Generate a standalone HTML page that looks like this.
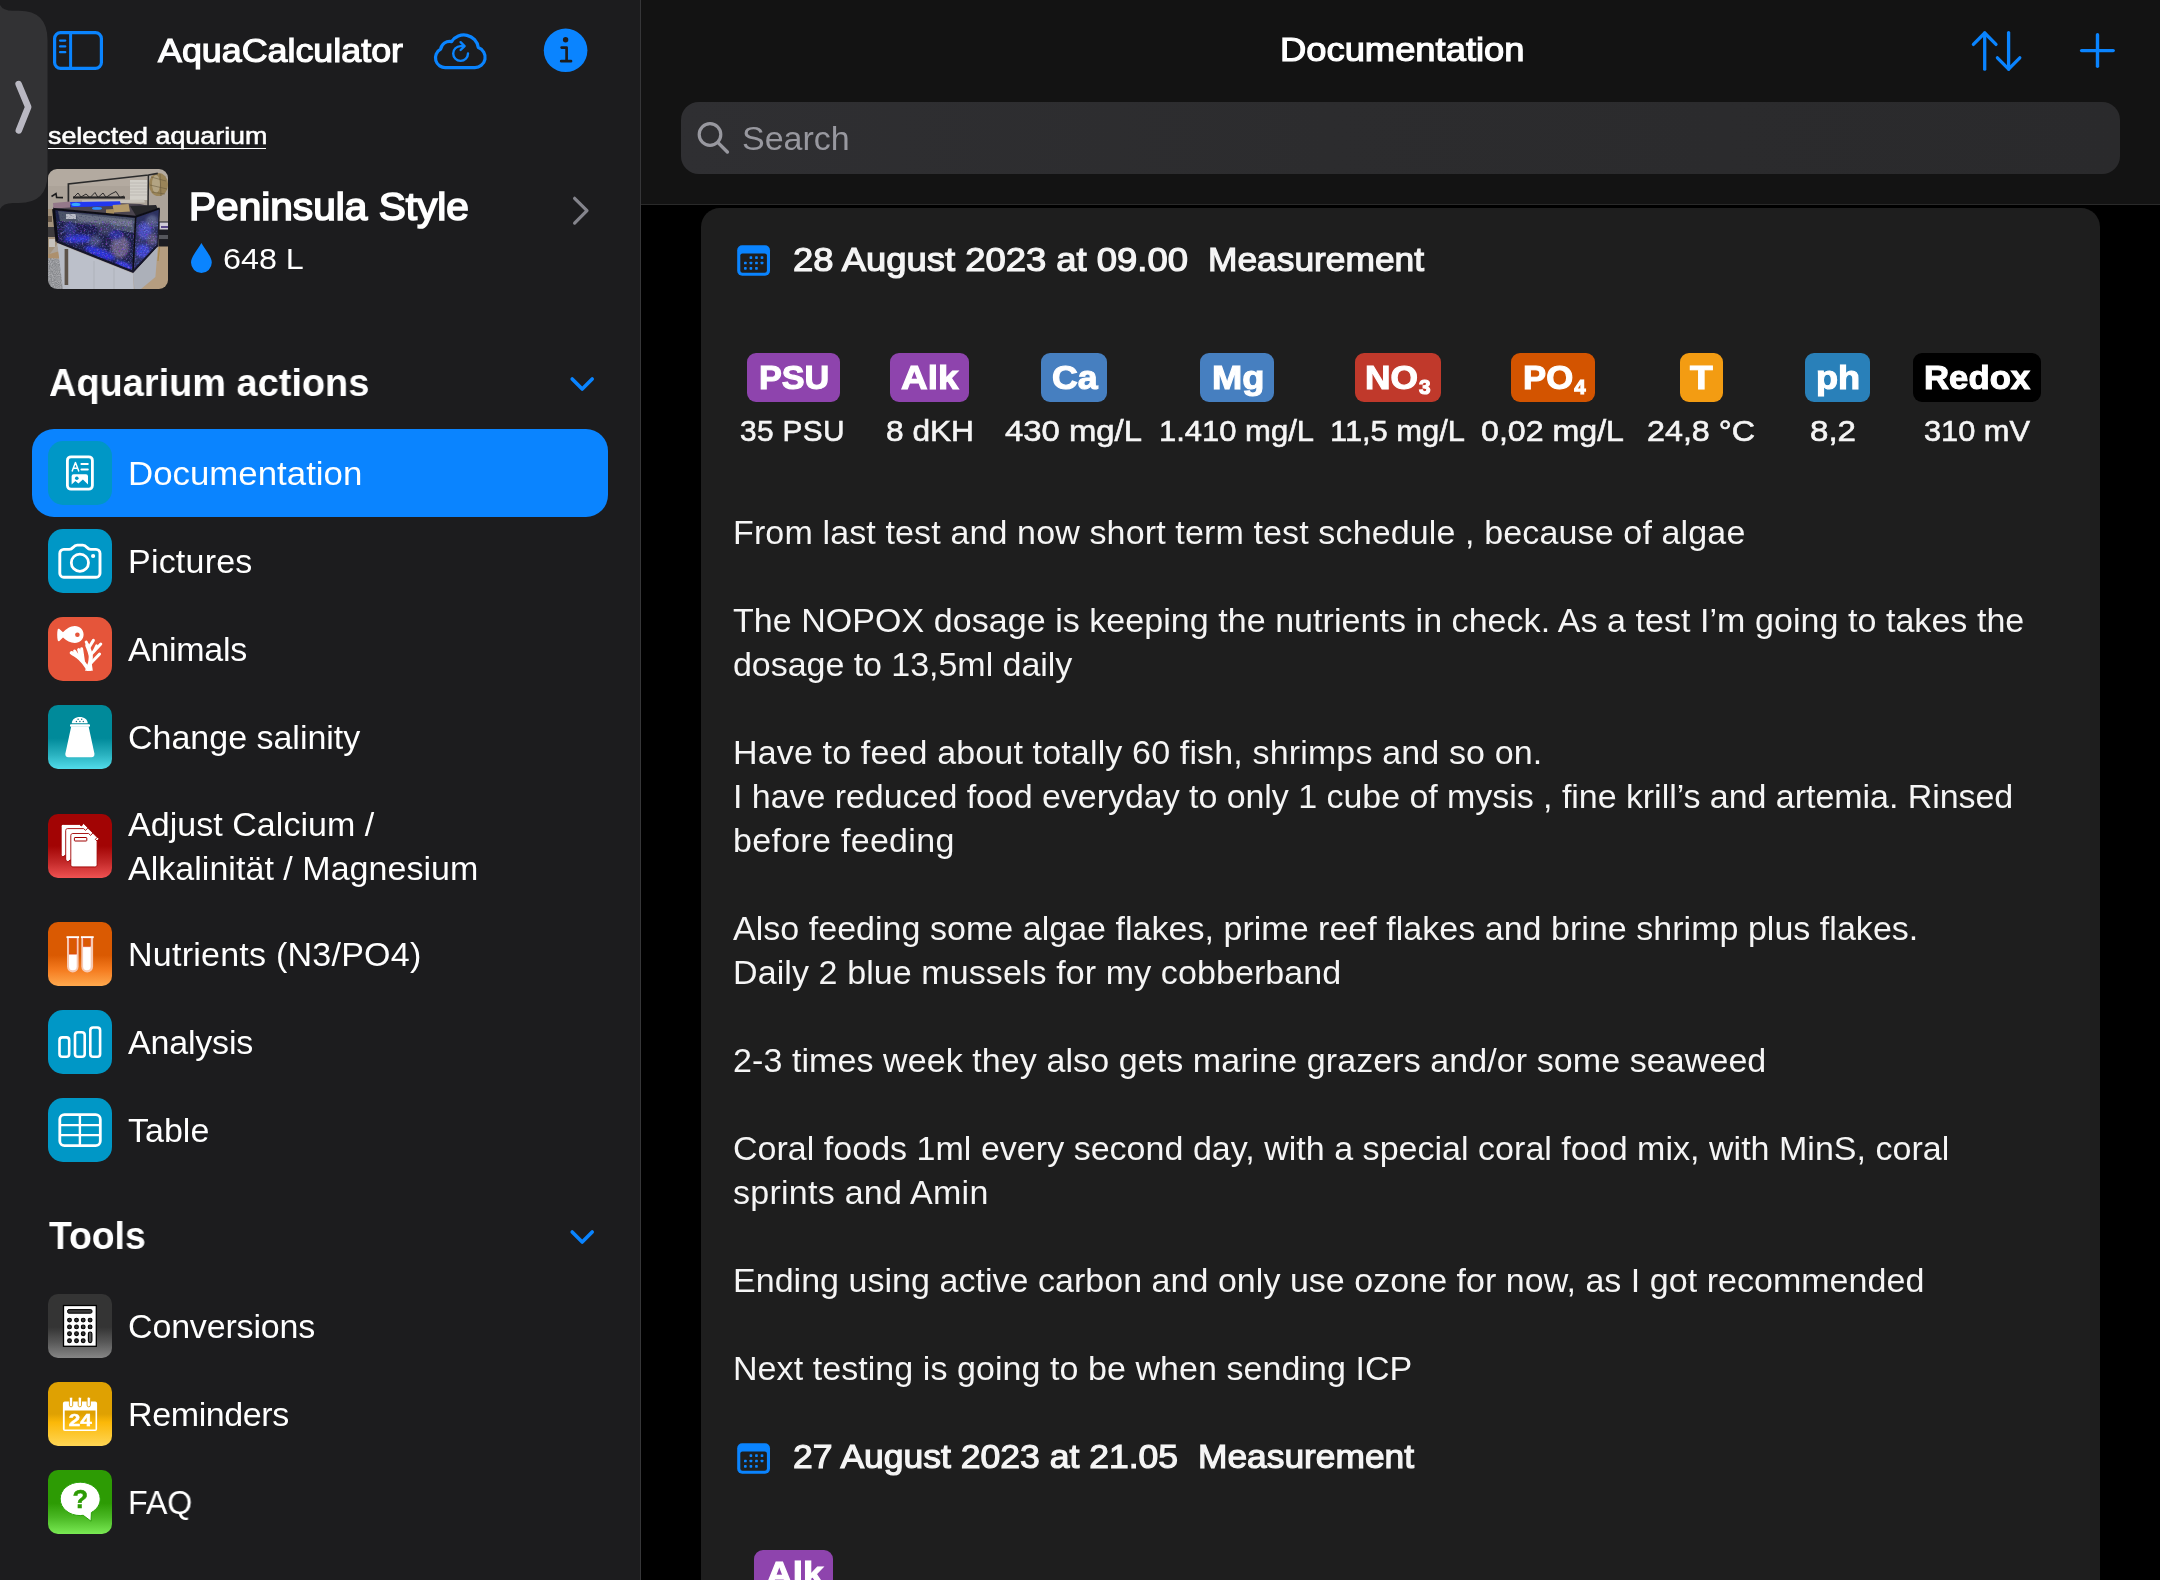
<!DOCTYPE html>
<html lang="en">
<head>
<meta charset="utf-8">
<title>AquaCalculator – Documentation</title>
<style>
html,body{margin:0;padding:0;background:#000;}
body{width:2160px;height:1580px;position:relative;overflow:hidden;font-family:"Liberation Sans",sans-serif;}
.abs{position:absolute;}
.t{position:absolute;white-space:nowrap;will-change:transform;font-family:"Liberation Sans",sans-serif;}
#sidebar{left:0;top:0;width:640px;height:1580px;background:#1c1c1e;}
#nav{left:641px;top:0;width:1519px;height:204px;background:#131313;border-bottom:1px solid #2a2a2a;}
#divider{left:640px;top:0;width:1px;height:1580px;background:#363638;}
#searchbar{left:681px;top:102px;width:1438.6px;height:71.6px;border-radius:18px;background:linear-gradient(90deg,#2f2f32 0%,#2c2c2e 45%,#2a2a2c 100%);}
#card{left:701px;top:208px;width:1399px;height:1400px;border-radius:19px 19px 0 0;background:#1e1e1e;}
#selrow{left:32px;top:429px;width:576px;height:88px;border-radius:22px;background:#0a84ff;}
.ic{will-change:transform;position:absolute;left:48px;width:64px;height:64px;border-radius:15px;overflow:hidden;}
.ic svg{position:absolute;left:0;top:0;}
.tag{position:absolute;top:353px;height:49px;border-radius:9px;}
.tagt{position:absolute;white-space:nowrap;font-weight:700;font-size:34px;line-height:44px;color:#fff;-webkit-text-stroke:1.1px #fff;}
.sb{font-size:20px;position:relative;top:4.5px;margin-left:1px;}
u.ul{position:absolute;left:48px;top:147.8px;width:218px;height:1.7px;background:#fff;}
</style>
</head>
<body>
<div class="abs" id="sidebar"></div>
<div class="abs" id="nav"></div>
<div class="abs" id="divider"></div>
<div class="abs" id="searchbar"></div>
<div class="abs" id="card"></div>
<div class="abs" id="selrow"></div>

<!-- window handle -->
<svg class="abs" style="left:0;top:0" width="60" height="220" viewBox="0 0 60 220">
  <path d="M0 5 Q3 10.8 13 10.8 L19 10.8 Q47.5 10.8 47.5 40 L47.5 174 Q47.5 203 19 203 L13 203 Q3 203 0 209 Z" fill="#323234"/>
  <polyline points="18.6,84 28.2,107 18.8,130.5" fill="none" stroke="#b9b8c2" stroke-width="6.5" stroke-linecap="round" stroke-linejoin="round"/>
</svg>

<!-- sidebar toggle icon -->
<svg class="abs" style="left:50px;top:28px" width="58" height="46" viewBox="50 28 58 46">
  <rect x="54.6" y="32.6" width="46.8" height="35.8" rx="6" fill="none" stroke="#0a84ff" stroke-width="3.2"/>
  <line x1="70.6" y1="33" x2="70.6" y2="68" stroke="#0a84ff" stroke-width="3"/>
  <g stroke="#0a84ff" stroke-width="2.2" stroke-linecap="round"><line x1="60" y1="40.6" x2="65.3" y2="40.6"/><line x1="60" y1="46.4" x2="65.3" y2="46.4"/><line x1="60" y1="52.2" x2="65.3" y2="52.2"/></g>
</svg>

<!-- cloud -->
<svg class="abs" style="left:429.1px;top:27.5px" width="62" height="46" viewBox="430 28 62 46">
  <path d="M447 67.6 H475.5 A10.3 10.3 0 0 0 479.3 47.6 A14.6 14.6 0 0 0 452.6 41.6 A9.2 9.2 0 0 0 441.6 49.2 A9.8 9.8 0 0 0 447 67.6 Z" fill="none" stroke="#0a84ff" stroke-width="3.2" stroke-linejoin="round"/>
  <path d="M469 53.5 A7.4 7.4 0 1 1 461.6 46.1 L464.8 46.1" fill="none" stroke="#0a84ff" stroke-width="2.4" stroke-linecap="round"/>
  <polyline points="461.6,42.2 465.6,46.1 461.6,50" fill="none" stroke="#0a84ff" stroke-width="2.4" stroke-linecap="round" stroke-linejoin="round"/>
</svg>

<!-- info -->
<svg class="abs" style="left:540px;top:25px" width="52" height="52" viewBox="540 25 52 52">
  <circle cx="565.6" cy="50.3" r="21.8" fill="#0a84ff"/>
  <circle cx="565.6" cy="39.8" r="2.7" fill="#1c1c1e"/>
  <path d="M561.6 47.6 H566.6 V61 M561.2 61.2 H571" fill="none" stroke="#1c1c1e" stroke-width="2.7" stroke-linecap="round" stroke-linejoin="round"/>
</svg>

<u class="ul"></u>

<!-- aquarium photo -->
<svg class="abs" style="left:48px;top:169px;border-radius:9px" width="120" height="120" viewBox="0 0 120 120">
  <defs>
    <filter id="bl" x="-5%" y="-5%" width="110%" height="110%"><feGaussianBlur stdDeviation="0.55"/></filter>
    <filter id="bl2" x="-20%" y="-20%" width="140%" height="140%"><feGaussianBlur stdDeviation="1.6"/></filter>
    <filter id="nz" x="0" y="0" width="100%" height="100%"><feTurbulence type="fractalNoise" baseFrequency="0.9" numOctaves="2" seed="3"/><feColorMatrix type="matrix" values="0 0 0 0 0.5  0 0 0 0 0.5  0 0 0 0 0.52  1.6 0 0 0 -0.45"/></filter>
    <filter id="sp" x="0" y="0" width="100%" height="100%"><feTurbulence type="fractalNoise" baseFrequency="0.55" numOctaves="3" seed="11"/><feColorMatrix type="matrix" values="1.2 0 0 0 -0.25  0 1.2 0 0 -0.35  0 0 1.6 0 0.05  0 0 2.4 0 -1.1"/></filter>
    <filter id="sp2" x="0" y="0" width="100%" height="100%"><feTurbulence type="fractalNoise" baseFrequency="0.7" numOctaves="2" seed="5"/><feColorMatrix type="matrix" values="0 0 0 0 0.04  0 0 0 0 0.04  0 0 0 0 0.12  -2.6 0 0 0 1.25"/></filter>
    <clipPath id="tank"><polygon points="5.3,39.9 87.7,47.8 111.6,39.4 109.8,76.2 85,102.7 8.9,72.6"/></clipPath>
    <clipPath id="front"><polygon points="5.3,39.9 87.7,47.8 85,102.7 8.9,72.6"/></clipPath>
    <clipPath id="side"><polygon points="87.7,47.8 111.6,39.4 109.8,76.2 85,102.7"/></clipPath>
  </defs>
  <g filter="url(#bl)">
  <rect x="-5" y="-5" width="130" height="130" fill="#aca399"/>
  <rect x="-5" y="-5" width="130" height="22" fill="#b3aaa0"/>
  <!-- blinds -->
  <rect x="82" y="11" width="17.5" height="20" fill="#d2cfc8"/>
  <g stroke="#b9b5ae" stroke-width="0.8"><line x1="82" y1="14" x2="99" y2="14"/><line x1="82" y1="17" x2="99" y2="17"/><line x1="82" y1="20" x2="99" y2="20"/><line x1="82" y1="23" x2="99" y2="23"/><line x1="82" y1="26" x2="99" y2="26"/></g>
  <!-- wicker lamp -->
  <ellipse cx="110.5" cy="15.5" rx="9.6" ry="11.6" fill="#9a8459"/>
  <ellipse cx="108" cy="15" rx="4" ry="9" fill="#c9bfa6" opacity="0.55"/>
  <g stroke="#5f5136" stroke-width="0.7" opacity="0.7"><line x1="103" y1="8" x2="118" y2="12"/><line x1="102" y1="16" x2="119" y2="20"/><line x1="104" y1="23" x2="117" y2="25"/><line x1="112" y1="5" x2="113" y2="27"/></g>
  <!-- right furniture + floor -->
  <polygon points="106,76 125,70 125,125 84,125" fill="#b59d80"/>
  <rect x="110.5" y="52.5" width="12" height="25" fill="#1b1a20"/>
  <rect x="111.5" y="53.5" width="10" height="7" fill="#cfcbd6"/>
  <rect x="113" y="57" width="8" height="2" fill="#5a4a8a"/>
  <rect x="111" y="66" width="10" height="4" fill="#55565c"/>
  <line x1="111.5" y1="78" x2="110" y2="92" stroke="#a98a4e" stroke-width="1.2"/>
  <!-- left side -->
  <polygon points="-2,40 6,40 10,74 -2,90" fill="#a3927c"/>
  <rect x="-2" y="47" width="6" height="6" fill="#6b5a48"/>
  <rect x="0" y="58" width="7" height="10" fill="#3d3a3e"/>
  <rect x="1" y="70" width="6" height="8" fill="#c6c2bd"/>
  <!-- floor bottom-left and rug -->
  <polygon points="-2,86 12,82 30,125 -2,125" fill="#ad906d"/>
  <polygon points="-2,89 13,90 15.5,121 -2,121" fill="#85878b"/>
  <rect x="-2" y="89" width="18" height="32" filter="url(#nz)" opacity="0.9"/>
  <!-- light rail -->
  <polyline points="20.4,33 20.4,15 100.4,6 109.8,4.4" fill="none" stroke="#2b2b2c" stroke-width="1.7"/>
  <line x1="100.4" y1="6" x2="100" y2="40" stroke="#2b2b2c" stroke-width="1.5"/>
  <polyline points="3.5,27.5 8,24.5 8.6,28.4 15,28.6" fill="none" stroke="#1d1d1f" stroke-width="1.6"/>
  <path d="M26 28 L30 24 L33 28 L38 25 L42 28.6 L47 23.5 L50 28.5 L55 24 L58 28.4 L63 25 L68 22.5 L72 28.6 L76 27" fill="none" stroke="#1f1e20" stroke-width="0.9"/>
  <rect x="25" y="27.4" width="52" height="2.2" fill="#262527"/>
  <!-- tank top -->
  <polygon points="5,38 40,33 92,35 111.6,39.4 87.7,47.8 5.3,39.9" fill="#4b4450"/>
  <polygon points="5,34 22,32.6 22,38.4 5.5,39.6" fill="#94788a"/>
  <polygon points="34,31.6 96,30.6 97,33.6 34,35" fill="#c7c2ba"/>
  <polygon points="22,33 72,32.2 73,36.8 23,38.2" fill="#2338f0"/>
  <ellipse cx="28" cy="35.4" rx="4.5" ry="1.6" fill="#35a8ff"/>
  <ellipse cx="49" cy="39.4" rx="5" ry="1.3" fill="#2e8cff"/>
  <polygon points="64.6,36 80.6,35 82,42.6 66,43.6" fill="#b39a6b"/>
  <polygon points="58,40.4 66,40 66,45.6 58,44.8" fill="#a88f5f"/>
  <polygon points="82,37 108,36 110,40 88,47" fill="#26262c"/>
  <!-- tank front -->
  <polygon points="5.3,39.9 87.7,47.8 85,102.7 8.9,72.6" fill="#1d2048"/>
  <g clip-path="url(#front)">
    <polygon points="10,42 87,49 86.5,64 40,56 12,52" fill="#4c5468"/>
    <polygon points="28,45 84,51 84,58 30,52" fill="#6c7386"/>
    <rect x="18" y="45" width="10" height="5" fill="#b9bcc6"/>
    <g filter="url(#bl2)">
      <ellipse cx="38" cy="63" rx="13" ry="8" fill="#1a1c4e"/>
      <ellipse cx="58" cy="60" rx="8" ry="6" fill="#3b4160"/>
      <ellipse cx="72" cy="78" rx="9" ry="11" fill="#6d6484"/>
      <ellipse cx="68" cy="66" rx="7" ry="5" fill="#2a2e9a"/>
      <ellipse cx="30" cy="70" rx="14" ry="4" fill="#2d35d2"/>
      <ellipse cx="52" cy="84" rx="16" ry="4.5" fill="#2b32d8" transform="rotate(21 52 84)"/>
      <ellipse cx="76" cy="96" rx="9" ry="3" fill="#3540e6" transform="rotate(21 76 96)"/>
      <ellipse cx="47" cy="72" rx="6" ry="5" fill="#44507a"/>
      <ellipse cx="22" cy="60" rx="6" ry="7" fill="#2a3080"/>
    </g>
  </g>
  <!-- tank side -->
  <polygon points="87.7,47.8 111.6,39.4 109.8,76.2 85,102.7" fill="#2b3060"/>
  <g clip-path="url(#side)" filter="url(#bl2)">
    <ellipse cx="97" cy="62" rx="7" ry="9" fill="#4a50c0"/>
    <ellipse cx="104" cy="52" rx="6" ry="6" fill="#59608a"/>
    <ellipse cx="95" cy="82" rx="7" ry="7" fill="#3c44d0"/>
    <ellipse cx="104" cy="70" rx="5" ry="6" fill="#5a5478"/>
  </g>
  <g clip-path="url(#tank)"><rect x="5" y="52" width="107" height="52" filter="url(#sp)" opacity="0.6"/><rect x="5" y="40" width="107" height="64" filter="url(#sp2)" opacity="0.7"/></g>
  <!-- frame -->
  <polyline points="5.3,39.9 87.7,47.8 111.6,39.4" fill="none" stroke="#101116" stroke-width="2"/>
  <line x1="87.7" y1="47.8" x2="85" y2="102.7" stroke="#101116" stroke-width="1.6"/>
  <line x1="5.6" y1="40" x2="9" y2="72.6" stroke="#101116" stroke-width="3"/>
  <line x1="111.4" y1="39.6" x2="109.8" y2="76.2" stroke="#1a1b24" stroke-width="1.2"/>
  <polyline points="8.9,72.6 85,102.7 109.8,76.2" fill="none" stroke="#12132a" stroke-width="2.2"/>
  <!-- cabinet -->
  <polygon points="9.4,74.6 85,104.4 86,125 17,125" fill="#bcc0ca"/>
  <polygon points="85,104.4 109.8,77.6 107.4,108 87,125" fill="#acb0b9"/>
  <polygon points="9.4,74.6 20,79 22,125 15.5,125" fill="#b7bbc4"/>
  <rect x="16.6" y="80" width="3.6" height="36" fill="#5d5349"/>
  <line x1="46" y1="92" x2="46" y2="125" stroke="#a9adb6" stroke-width="0.7"/>
  <line x1="66" y1="99" x2="66" y2="125" stroke="#a9adb6" stroke-width="0.7"/>
  </g>
</svg>

<!-- drop -->
<svg class="abs" style="left:188px;top:240px" width="28" height="36" viewBox="188 240 28 36">
  <path d="M201.4 243 C204 248 211.8 256.5 211.8 262.6 A10.4 10.4 0 0 1 191 262.6 C191 256.5 198.8 248 201.4 243 Z" fill="#0a84ff"/>
</svg>

<!-- chevron right -->
<svg class="abs" style="left:568px;top:190px" width="28" height="42" viewBox="568 190 28 42">
  <polyline points="574.6,198.3 587,210.7 574.6,223.1" fill="none" stroke="#84848c" stroke-width="3.2" stroke-linecap="round" stroke-linejoin="round"/>
</svg>
<!-- chevrons down -->
<svg class="abs" style="left:565px;top:372px" width="34" height="24" viewBox="565 372 34 24">
  <polyline points="572.2,379 582.2,389 592.2,379" fill="none" stroke="#0a84ff" stroke-width="3.6" stroke-linecap="round" stroke-linejoin="round"/>
</svg>
<svg class="abs" style="left:565px;top:1225px" width="34" height="24" viewBox="565 1225 34 24">
  <polyline points="572.2,1232 582.2,1242 592.2,1232" fill="none" stroke="#0a84ff" stroke-width="3.6" stroke-linecap="round" stroke-linejoin="round"/>
</svg>

<!-- Documentation -->
<div class="ic" style="top:441px;background:#0097c6">
<svg width="64" height="64" viewBox="0 0 64 64">
  <rect x="19.4" y="15.8" width="25" height="32.4" rx="3.6" fill="none" stroke="#fff" stroke-width="2.8"/>
  <path d="M24.2 29.9 L27.45 21.6 L30.7 29.9 M25.4 27.3 H29.5" fill="none" stroke="#fff" stroke-width="1.5" stroke-linejoin="round" stroke-linecap="round"/>
  <path d="M33.4 23 H39.8 M33.4 28.6 H39.8" stroke="#fff" stroke-width="2" stroke-linecap="round"/>
  <path d="M23.6 35.2 A2 2 0 0 1 25.6 33.2 H38 A2 2 0 0 1 40 35.2 V43.4 L34.9 38.4 L30.4 42.4 L27.4 40 L23.6 43.4 Z" fill="#fff"/>
  <circle cx="28.8" cy="37.3" r="1.8" fill="#0097c6"/>
</svg></div>
<!-- Pictures -->
<div class="ic" style="top:529px;background:#0097c6">
<svg width="64" height="64" viewBox="0 0 64 64">
  <path d="M11.8 24.4 A4 4 0 0 1 15.8 20.4 H21.3 C23.3 20.4 24.2 19.5 25.2 18.3 C26.2 17 27.2 16.1 29.2 16.1 H34.8 C36.8 16.1 37.8 17 38.8 18.3 C39.8 19.5 40.7 20.4 42.7 20.4 H48 A4 4 0 0 1 52 24.4 V44.2 A4 4 0 0 1 48 48.2 H15.8 A4 4 0 0 1 11.8 44.2 Z" fill="none" stroke="#fff" stroke-width="2.9" stroke-linejoin="round"/>
  <circle cx="31.9" cy="33.7" r="8.6" fill="none" stroke="#fff" stroke-width="2.8"/>
  <circle cx="45.1" cy="27" r="2.1" fill="#fff"/>
</svg></div>
<!-- Animals -->
<div class="ic" style="top:617px;background:#e5553a">
<svg width="64" height="64" viewBox="0 0 64 64">
  <path d="M15 15.2 C18.5 12 22.5 9.1 26.8 9.1 C32 9.1 35.6 12.8 35.6 17.6 C35.6 22.4 32 26.1 26.8 26.1 C22.5 26.1 18.5 23.6 15 20.6 L11.4 24 C10.6 24.6 9.9 24 9.7 23.2 C9.1 20.5 9 15 9.7 12.4 C9.9 11.6 10.8 11.4 11.4 12 Z" fill="#fff"/>
  <circle cx="29.4" cy="17.7" r="2.3" fill="#e5553a"/>
  <defs><clipPath id="cb"><rect x="0" y="0" width="64" height="53.8"/></clipPath></defs>
  <g fill="none" stroke="#fff" stroke-linecap="round" stroke-linejoin="round" clip-path="url(#cb)">
    <path d="M41 53 C41.5 47 43.5 42 42.6 38 C41.8 34 40.4 31 39.4 28.4" stroke-width="4.2"/>
    <path d="M40.4 30 L38.2 25 M41 30.5 L45.4 23.4" stroke-width="3"/>
    <path d="M43 37.5 L52.8 27" stroke-width="3"/>
    <path d="M46 34 L48.6 28.6" stroke-width="2.6"/>
    <path d="M43 46 L51.6 37" stroke-width="3"/>
    <path d="M40 52 C37 47 34.5 44 31.8 41.6 C29 39.2 26 37.6 23.6 35.8" stroke-width="3.6"/>
    <path d="M31 40.5 L26.6 34 M33.6 43 L30.6 32.6 M35.4 44 L33.6 31.8" stroke-width="3"/>
  </g>
  <path d="M37 53.8 L40 46 L44 48 L44.8 53.8 Z" fill="#fff"/>
</svg></div>
<!-- Change salinity -->
<div class="ic" style="top:705px;border-radius:10px;background:linear-gradient(180deg,#008a9a 0%,#008a9a 52%,#2ab2c0 78%,#52dcea 100%)">
<svg width="64" height="64" viewBox="0 0 64 64">
  <path d="M23.8 18.2 C23.8 14.2 27.4 11.9 31.75 11.9 C36.1 11.9 39.7 14.2 39.7 18.2 Z" fill="#fff"/>
  <rect x="22" y="19.2" width="20" height="2.6" rx="1" fill="#fff"/>
  <path d="M23.2 21.6 H40.6 L46.4 48.4 C46.8 50.6 45.6 52.2 43.4 52.2 H20.4 C18.2 52.2 17 50.6 17.4 48.4 Z" fill="#fff"/>
  <g fill="#0b6f80"><circle cx="30.1" cy="14.2" r="0.7"/><circle cx="33.7" cy="14.2" r="0.7"/><circle cx="28.4" cy="16.5" r="0.7"/><circle cx="31.9" cy="16.5" r="0.7"/><circle cx="35.3" cy="16.5" r="0.7"/></g>
</svg></div>
<!-- Adjust Calcium -->
<div class="ic" style="top:814px;border-radius:10px;background:linear-gradient(180deg,#a20404 0%,#a20404 50%,#c42a2a 76%,#f05252 100%)">
<svg width="64" height="64" viewBox="0 0 64 64">
  <g fill="#fff" stroke="#a00000" stroke-width="0.9" stroke-linejoin="round">
    <path d="M15.2 10.4 H31.4 L33.4 12 L35.6 9.4 L51 24.8 L49 27 V40 H19 L15 42.8 C13.8 42.4 13.2 41.4 13.2 40.4 V12.4 C13.2 11.2 14 10.4 15.2 10.4 Z"/>
    <path d="M19.6 14.6 H35.6 L37.6 16.4 L39.8 14 L45 19 V46 H22 L20 47.8 C18.6 47.4 17.7 46.4 17.7 45 V16.6 C17.7 15.4 18.4 14.6 19.6 14.6 Z"/>
    <path d="M24.8 19.5 H40.6 L42.6 21.4 L44.8 19 L49.1 23.4 L47.4 25.4 L49.1 27.1 V50.6 C49.1 52 48.2 52.9 46.8 52.9 H25 C23.6 52.9 22.8 52 22.8 50.6 V21.6 C22.8 20.3 23.6 19.5 24.8 19.5 Z"/>
  </g>
  <rect x="26.4" y="23.5" width="12.4" height="3.5" rx="0.6" fill="#fff" stroke="#a00000" stroke-width="1"/>
</svg></div>
<!-- Nutrients -->
<div class="ic" style="top:922px;border-radius:10px;background:linear-gradient(180deg,#da5a02 0%,#da5a02 52%,#f47a1e 74%,#ffa94e 100%)">
<svg width="64" height="64" viewBox="0 0 64 64">
  <g>
    <path d="M19 15 H30.6 V44.6 A5.8 5.8 0 0 1 19 44.6 Z" fill="#f6c9b4"/>
    <rect x="18.5" y="14.2" width="12.6" height="1.9" fill="#fff"/>
    <rect x="21.2" y="16.4" width="7.3" height="15.6" fill="#da5a02" stroke="#e23a10" stroke-width="0.5"/>
    <path d="M21 32.9 H28.7 V44.4 A3.85 3.85 0 0 1 21 44.4 Z" fill="#fff"/>
    <path d="M33.3 15 H45.1 V44.6 A5.9 5.9 0 0 1 33.3 44.6 Z" fill="#f6c9b4"/>
    <rect x="32.9" y="14.2" width="12.8" height="1.9" fill="#fff"/>
    <rect x="35.3" y="16.4" width="7.2" height="8" fill="#da5a02" stroke="#e23a10" stroke-width="0.5"/>
    <path d="M35.1 25.3 H42.7 V44.4 A3.8 3.8 0 0 1 35.1 44.4 Z" fill="#fff"/>
  </g>
</svg></div>
<!-- Analysis -->
<div class="ic" style="top:1010px;background:#0097c6">
<svg width="64" height="64" viewBox="0 0 64 64">
  <g fill="none" stroke="#fff" stroke-width="2.6">
    <rect x="11.5" y="27.4" width="9.7" height="19.4" rx="2.8"/>
    <rect x="27" y="22.3" width="9.7" height="24.5" rx="2.8"/>
    <rect x="42.3" y="17.5" width="9.8" height="29.3" rx="2.8"/>
  </g>
</svg></div>
<!-- Table -->
<div class="ic" style="top:1098px;background:#0097c6">
<svg width="64" height="64" viewBox="0 0 64 64">
  <rect x="11.8" y="16.6" width="40.5" height="31.1" rx="4.6" fill="none" stroke="#fff" stroke-width="2.8"/>
  <path d="M12 27.1 H52 M12 37.1 H52 M31.9 17 V47.6" fill="none" stroke="#fff" stroke-width="2.4"/>
</svg></div>
<!-- Conversions -->
<div class="ic" style="top:1294px;border-radius:10px;background:linear-gradient(180deg,#343434 0%,#343434 52%,#595959 76%,#868686 100%)">
<svg width="64" height="64" viewBox="0 0 64 64">
  <rect x="15.5" y="11.5" width="32.8" height="40.8" fill="#fff" stroke="#000" stroke-width="1.3"/>
  <rect x="19.6" y="15.6" width="24.4" height="3.6" rx="1.4" fill="#3a3a3a" stroke="#000" stroke-width="1"/>
  <g fill="#333" stroke="#000" stroke-width="1.1">
    <circle cx="21.5" cy="26.1" r="1.9"/><circle cx="28.5" cy="26.1" r="1.9"/><circle cx="35.2" cy="26.1" r="1.9"/><circle cx="42.1" cy="26.1" r="1.9"/>
    <circle cx="21.5" cy="32.9" r="1.9"/><circle cx="28.5" cy="32.9" r="1.9"/><circle cx="35.2" cy="32.9" r="1.9"/><circle cx="42.1" cy="32.9" r="1.9"/>
    <circle cx="21.5" cy="39.7" r="1.9"/><circle cx="28.5" cy="39.7" r="1.9"/><circle cx="35.2" cy="39.7" r="1.9"/>
    <circle cx="21.5" cy="46.8" r="1.9"/><circle cx="28.5" cy="46.8" r="1.9"/><circle cx="35.2" cy="46.8" r="1.9"/>
    <rect x="40.4" y="38" width="3.5" height="10.6" rx="1.75" fill="#555"/>
  </g>
</svg></div>
<!-- Reminders -->
<div class="ic" style="top:1382px;border-radius:10px;background:linear-gradient(180deg,#dfa102 0%,#dfa102 50%,#fbb808 63%,#ffd655 100%)">
<svg width="64" height="64" viewBox="0 0 64 64">
  <path d="M16.9 19.5 H47.1 A2 2 0 0 1 49.1 21.5 V47.1 A2 2 0 0 1 47.1 49.1 H16.9 A2 2 0 0 1 14.9 47.1 V21.5 A2 2 0 0 1 16.9 19.5 Z M16.7 28.5 V47.5 H47.5 V28.5 Z" fill="#fff" fill-rule="evenodd"/>
  <g fill="#fff" stroke="#e0a208" stroke-width="0.9"><rect x="21.4" y="15" width="3.3" height="9.8" rx="1.6"/><rect x="30.2" y="15" width="3.3" height="9.8" rx="1.6"/><rect x="39.1" y="15" width="3.3" height="9.8" rx="1.6"/></g>
  <text x="32.2" y="44.3" text-anchor="middle" font-family="Liberation Sans, sans-serif" font-weight="700" font-size="17.4" textLength="23" lengthAdjust="spacingAndGlyphs" fill="#fff" stroke="#fff" stroke-width="0.5">24</text>
</svg></div>
<!-- FAQ -->
<div class="ic" style="top:1470px;border-radius:10px;background:linear-gradient(180deg,#2d9b04 0%,#2d9b04 52%,#4ab824 74%,#7aea54 100%)">
<svg width="64" height="64" viewBox="0 0 64 64">
  <g stroke="#2aa208" stroke-width="1">
  <path d="M32.2 12.2 C43.3 12.2 52.2 19.6 52.2 28.9 C52.2 34.4 49 39.3 43.4 42.5 L43 51.2 L35.2 45.3 C34.2 45.5 33.2 45.6 32.2 45.6 C21.1 45.6 12.2 38.2 12.2 28.9 C12.2 19.6 21.1 12.2 32.2 12.2 Z" fill="#fff"/>
  </g>
  <text x="32.2" y="38.2" text-anchor="middle" font-family="Liberation Sans, sans-serif" font-weight="700" font-size="25.5" fill="#2d9b04" stroke="#2d9b04" stroke-width="0.5">?</text>
</svg></div>


<!-- nav right icons -->
<svg class="abs" style="left:1960px;top:24px" width="70" height="54" viewBox="1960 24 70 54">
  <g fill="none" stroke="#0a84ff" stroke-width="3.3" stroke-linecap="round" stroke-linejoin="round">
    <line x1="1984.7" y1="33" x2="1984.7" y2="69.2"/><polyline points="1973.4,44.4 1984.7,33 1996,44.4"/>
    <line x1="2008.6" y1="32.6" x2="2008.6" y2="69"/><polyline points="1997.4,57.8 2008.6,69.2 2019.8,57.8"/>
  </g>
</svg>
<svg class="abs" style="left:2070px;top:24px" width="54" height="54" viewBox="2070 24 54 54">
  <g fill="none" stroke="#0a84ff" stroke-width="3.4" stroke-linecap="round"><line x1="2081.6" y1="50.6" x2="2113.2" y2="50.6"/><line x1="2097.5" y1="34.7" x2="2097.5" y2="66.3"/></g>
</svg>

<!-- search glass -->
<svg class="abs" style="left:690px;top:115px" width="46" height="46" viewBox="690 115 46 46">
  <circle cx="710" cy="134.5" r="10.8" fill="none" stroke="#98989f" stroke-width="3.2"/>
  <line x1="718" y1="142.6" x2="727.4" y2="152" stroke="#98989f" stroke-width="3.4" stroke-linecap="round"/>
</svg>

<svg class="abs" style="left:737px;top:245.2px" width="34" height="32" viewBox="0 0 34 32"><rect x="0.2" y="0.2" width="32.8" height="30.6" rx="5" fill="#0a84ff"/><rect x="3.3" y="8.4" width="26.6" height="19.3" rx="2.2" fill="#1e1e1e"/><rect x="12.55" y="11.20" width="2.7" height="2.7" rx="0.7" fill="#0a84ff"/><rect x="18.10" y="11.20" width="2.7" height="2.7" rx="0.7" fill="#0a84ff"/><rect x="23.65" y="11.20" width="2.7" height="2.7" rx="0.7" fill="#0a84ff"/><rect x="7.00" y="16.65" width="2.7" height="2.7" rx="0.7" fill="#0a84ff"/><rect x="12.55" y="16.65" width="2.7" height="2.7" rx="0.7" fill="#0a84ff"/><rect x="18.10" y="16.65" width="2.7" height="2.7" rx="0.7" fill="#0a84ff"/><rect x="23.65" y="16.65" width="2.7" height="2.7" rx="0.7" fill="#0a84ff"/><rect x="7.00" y="22.10" width="2.7" height="2.7" rx="0.7" fill="#0a84ff"/><rect x="12.55" y="22.10" width="2.7" height="2.7" rx="0.7" fill="#0a84ff"/><rect x="18.10" y="22.10" width="2.7" height="2.7" rx="0.7" fill="#0a84ff"/></svg>
<svg class="abs" style="left:737px;top:1442.5px" width="34" height="32" viewBox="0 0 34 32"><rect x="0.2" y="0.2" width="32.8" height="30.6" rx="5" fill="#0a84ff"/><rect x="3.3" y="8.4" width="26.6" height="19.3" rx="2.2" fill="#1e1e1e"/><rect x="12.55" y="11.20" width="2.7" height="2.7" rx="0.7" fill="#0a84ff"/><rect x="18.10" y="11.20" width="2.7" height="2.7" rx="0.7" fill="#0a84ff"/><rect x="23.65" y="11.20" width="2.7" height="2.7" rx="0.7" fill="#0a84ff"/><rect x="7.00" y="16.65" width="2.7" height="2.7" rx="0.7" fill="#0a84ff"/><rect x="12.55" y="16.65" width="2.7" height="2.7" rx="0.7" fill="#0a84ff"/><rect x="18.10" y="16.65" width="2.7" height="2.7" rx="0.7" fill="#0a84ff"/><rect x="23.65" y="16.65" width="2.7" height="2.7" rx="0.7" fill="#0a84ff"/><rect x="7.00" y="22.10" width="2.7" height="2.7" rx="0.7" fill="#0a84ff"/><rect x="12.55" y="22.10" width="2.7" height="2.7" rx="0.7" fill="#0a84ff"/><rect x="18.10" y="22.10" width="2.7" height="2.7" rx="0.7" fill="#0a84ff"/></svg>

<div class="tag" style="left:747px;top:353px;width:93px;background:#8e44ad"></div>
<div class="tag" style="left:890px;top:353px;width:79px;background:#8e44ad"></div>
<div class="tag" style="left:1041px;top:353px;width:66px;background:#467fc0"></div>
<div class="tag" style="left:1200px;top:353px;width:74px;background:#467fc0"></div>
<div class="tag" style="left:1354.5px;top:353px;width:86.5px;background:#c0392b"></div>
<div class="tag" style="left:1511px;top:353px;width:84px;background:#d35400"></div>
<div class="tag" style="left:1680px;top:353px;width:43px;background:#f39c12"></div>
<div class="tag" style="left:1805px;top:353px;width:65px;background:#2980b9"></div>
<div class="tag" style="left:1913px;top:353px;width:128px;background:#000000"></div>
<div class="tag" style="left:754px;top:1549.7px;width:79px;background:#8e44ad"></div>

<div class="t" id="appname" style="left:157.5px;top:29.73px;font-size:32.6px;line-height:42px;font-weight:400;color:#ffffff;letter-spacing:0.000px;transform:scaleX(1.0999);transform-origin:0 0;-webkit-text-stroke:1.15px #ffffff;">AquaCalculator</div>
<div class="t" id="selaq" style="left:47.6px;top:121.01px;font-size:23.7px;line-height:31px;font-weight:400;color:#ffffff;letter-spacing:0.000px;transform:scaleX(1.1335);transform-origin:0 0;-webkit-text-stroke:0.55px #ffffff;">selected aquarium</div>
<div class="t" id="penin" style="left:188.6px;top:181.50px;font-size:38.3px;line-height:50px;font-weight:400;color:#ffffff;letter-spacing:0.000px;transform:scaleX(1.0603);transform-origin:0 0;-webkit-text-stroke:1.65px #ffffff;">Peninsula Style</div>
<div class="t" id="vol" style="left:223.2px;top:239.10px;font-size:30px;line-height:39px;font-weight:400;color:#ffffff;letter-spacing:0.000px;transform:scaleX(1.0762);transform-origin:0 0;">648 L</div>
<div class="t" id="aqact" style="left:48.6px;top:356.99px;font-size:39px;line-height:51px;font-weight:700;color:#ffffff;letter-spacing:0.000px;transform:scaleX(0.9727);transform-origin:0 0;">Aquarium actions</div>
<div class="t" id="tools" style="left:49.3px;top:1209.59px;font-size:39px;line-height:51px;font-weight:700;color:#ffffff;letter-spacing:0.000px;transform:scaleX(0.9564);transform-origin:0 0;">Tools</div>
<div class="t" id="r1" style="left:128.2px;top:451.22px;font-size:34px;line-height:44px;font-weight:400;color:#ffffff;letter-spacing:0.000px;transform:scaleX(1.0245);transform-origin:0 0;">Documentation</div>
<div class="t" id="r2" style="left:128.2px;top:539.22px;font-size:34px;line-height:44px;font-weight:400;color:#ffffff;letter-spacing:0.210px;">Pictures</div>
<div class="t" id="r3" style="left:128.2px;top:627.22px;font-size:34px;line-height:44px;font-weight:400;color:#ffffff;letter-spacing:-0.273px;">Animals</div>
<div class="t" id="r4" style="left:128.2px;top:715.22px;font-size:34px;line-height:44px;font-weight:400;color:#ffffff;letter-spacing:-0.013px;">Change salinity</div>
<div class="t" id="r5a" style="left:128.2px;top:801.52px;font-size:34px;line-height:44px;font-weight:400;color:#ffffff;letter-spacing:0.044px;">Adjust Calcium /</div>
<div class="t" id="r5b" style="left:128.2px;top:845.52px;font-size:34px;line-height:44px;font-weight:400;color:#ffffff;letter-spacing:0.031px;">Alkalinität / Magnesium</div>
<div class="t" id="r6" style="left:128.2px;top:932.22px;font-size:34px;line-height:44px;font-weight:400;color:#ffffff;letter-spacing:0.247px;">Nutrients (N3/PO4)</div>
<div class="t" id="r7" style="left:128.2px;top:1020.22px;font-size:34px;line-height:44px;font-weight:400;color:#ffffff;letter-spacing:-0.187px;">Analysis</div>
<div class="t" id="r8" style="left:128.2px;top:1108.22px;font-size:34px;line-height:44px;font-weight:400;color:#ffffff;letter-spacing:0.005px;">Table</div>
<div class="t" id="r9" style="left:128.2px;top:1304.22px;font-size:34px;line-height:44px;font-weight:400;color:#ffffff;letter-spacing:-0.168px;">Conversions</div>
<div class="t" id="r10" style="left:128.2px;top:1392.22px;font-size:34px;line-height:44px;font-weight:400;color:#ffffff;letter-spacing:-0.386px;">Reminders</div>
<div class="t" id="r11" style="left:128.2px;top:1480.22px;font-size:34px;line-height:44px;font-weight:400;color:#ffffff;letter-spacing:0.000px;transform:scaleX(0.9452);transform-origin:0 0;">FAQ</div>
<div class="t" id="title" style="left:1279.5px;top:29.03px;font-size:32.6px;line-height:42px;font-weight:400;color:#ffffff;letter-spacing:0.000px;transform:scaleX(1.1158);transform-origin:0 0;-webkit-text-stroke:1.15px #ffffff;">Documentation</div>
<div class="t" id="search" style="left:741.8px;top:115.72px;font-size:34px;line-height:44px;font-weight:400;color:#98989f;letter-spacing:-0.007px;">Search</div>
<div class="t" id="h1a" style="left:793px;top:239.13px;font-size:32.6px;line-height:42px;font-weight:400;color:#f5f5f5;letter-spacing:0.000px;transform:scaleX(1.1182);transform-origin:0 0;-webkit-text-stroke:1.15px #f5f5f5;">28 August 2023 at 09.00</div>
<div class="t" id="h1b" style="left:1208px;top:239.13px;font-size:32.6px;line-height:42px;font-weight:400;color:#f5f5f5;letter-spacing:0.000px;transform:scaleX(1.0844);transform-origin:0 0;-webkit-text-stroke:1.15px #f5f5f5;">Measurement</div>
<div class="t" id="h2a" style="left:793px;top:1436.13px;font-size:32.6px;line-height:42px;font-weight:400;color:#f5f5f5;letter-spacing:0.000px;transform:scaleX(1.0899);transform-origin:0 0;-webkit-text-stroke:1.15px #f5f5f5;">27 August 2023 at 21.05</div>
<div class="t" id="h2b" style="left:1198px;top:1436.13px;font-size:32.6px;line-height:42px;font-weight:400;color:#f5f5f5;letter-spacing:0.000px;transform:scaleX(1.0844);transform-origin:0 0;-webkit-text-stroke:1.15px #f5f5f5;">Measurement</div>
<div class="t" id="b0" style="left:733.2px;top:509.82px;font-size:34px;line-height:44px;font-weight:400;color:#f5f5f5;letter-spacing:0.135px;">From last test and now short term test schedule , because of algae</div>
<div class="t" id="b2" style="left:733.2px;top:597.82px;font-size:34px;line-height:44px;font-weight:400;color:#f5f5f5;letter-spacing:0.051px;">The NOPOX dosage is keeping the nutrients in check. As a test I’m going to takes the</div>
<div class="t" id="b3" style="left:733.2px;top:641.82px;font-size:34px;line-height:44px;font-weight:400;color:#f5f5f5;letter-spacing:-0.044px;">dosage to 13,5ml daily</div>
<div class="t" id="b5" style="left:733.2px;top:729.82px;font-size:34px;line-height:44px;font-weight:400;color:#f5f5f5;letter-spacing:0.150px;">Have to feed about totally 60 fish, shrimps and so on.</div>
<div class="t" id="b6" style="left:733.2px;top:773.82px;font-size:34px;line-height:44px;font-weight:400;color:#f5f5f5;letter-spacing:-0.049px;">I have reduced food everyday to only 1 cube of mysis , fine krill’s and artemia. Rinsed</div>
<div class="t" id="b7" style="left:733.2px;top:817.82px;font-size:34px;line-height:44px;font-weight:400;color:#f5f5f5;letter-spacing:0.300px;">before feeding</div>
<div class="t" id="b9" style="left:733.2px;top:905.82px;font-size:34px;line-height:44px;font-weight:400;color:#f5f5f5;letter-spacing:0.029px;">Also feeding some algae flakes, prime reef flakes and brine shrimp plus flakes.</div>
<div class="t" id="b10" style="left:733.2px;top:949.82px;font-size:34px;line-height:44px;font-weight:400;color:#f5f5f5;letter-spacing:0.096px;">Daily 2 blue mussels for my cobberband</div>
<div class="t" id="b12" style="left:733.2px;top:1037.82px;font-size:34px;line-height:44px;font-weight:400;color:#f5f5f5;letter-spacing:0.083px;">2-3 times week they also gets marine grazers and/or some seaweed</div>
<div class="t" id="b14" style="left:733.2px;top:1125.82px;font-size:34px;line-height:44px;font-weight:400;color:#f5f5f5;letter-spacing:0.023px;">Coral foods 1ml every second day, with a special coral food mix, with MinS, coral</div>
<div class="t" id="b15" style="left:733.2px;top:1169.82px;font-size:34px;line-height:44px;font-weight:400;color:#f5f5f5;letter-spacing:0.263px;">sprints and Amin</div>
<div class="t" id="b17" style="left:733.2px;top:1257.82px;font-size:34px;line-height:44px;font-weight:400;color:#f5f5f5;letter-spacing:0.033px;">Ending using active carbon and only use ozone for now, as I got recommended</div>
<div class="t" id="b19" style="left:733.2px;top:1345.82px;font-size:34px;line-height:44px;font-weight:400;color:#f5f5f5;letter-spacing:0.062px;">Next testing is going to be when sending ICP</div>
<div class="t" id="v1" style="left:740.4px;top:411.47px;font-size:29.8px;line-height:39px;font-weight:400;color:#f5f5f5;letter-spacing:0.379px;-webkit-text-stroke:0.6px #f5f5f5;">35 PSU</div>
<div class="t" id="v2" style="left:885.5px;top:411.47px;font-size:29.8px;line-height:39px;font-weight:400;color:#f5f5f5;letter-spacing:0.000px;transform:scaleX(1.0624);transform-origin:0 0;-webkit-text-stroke:0.6px #f5f5f5;">8 dKH</div>
<div class="t" id="v3" style="left:1005px;top:411.47px;font-size:29.8px;line-height:39px;font-weight:400;color:#f5f5f5;letter-spacing:0.000px;transform:scaleX(1.1026);transform-origin:0 0;-webkit-text-stroke:0.6px #f5f5f5;">430 mg/L</div>
<div class="t" id="v4" style="left:1159px;top:411.47px;font-size:29.8px;line-height:39px;font-weight:400;color:#f5f5f5;letter-spacing:0.000px;transform:scaleX(1.0396);transform-origin:0 0;-webkit-text-stroke:0.6px #f5f5f5;">1.410 mg/L</div>
<div class="t" id="v5" style="left:1330px;top:411.47px;font-size:29.8px;line-height:39px;font-weight:400;color:#f5f5f5;letter-spacing:0.000px;transform:scaleX(1.0360);transform-origin:0 0;-webkit-text-stroke:0.6px #f5f5f5;">11,5 mg/L</div>
<div class="t" id="v6" style="left:1481px;top:411.47px;font-size:29.8px;line-height:39px;font-weight:400;color:#f5f5f5;letter-spacing:0.000px;transform:scaleX(1.0791);transform-origin:0 0;-webkit-text-stroke:0.6px #f5f5f5;">0,02 mg/L</div>
<div class="t" id="v7" style="left:1647px;top:411.47px;font-size:29.8px;line-height:39px;font-weight:400;color:#f5f5f5;letter-spacing:0.000px;transform:scaleX(1.0830);transform-origin:0 0;-webkit-text-stroke:0.6px #f5f5f5;">24,8 °C</div>
<div class="t" id="v8" style="left:1810px;top:411.47px;font-size:29.8px;line-height:39px;font-weight:400;color:#f5f5f5;letter-spacing:0.000px;transform:scaleX(1.1105);transform-origin:0 0;-webkit-text-stroke:0.6px #f5f5f5;">8,2</div>
<div class="t" id="v9" style="left:1924px;top:411.47px;font-size:29.8px;line-height:39px;font-weight:400;color:#f5f5f5;letter-spacing:0.000px;transform:scaleX(1.0321);transform-origin:0 0;-webkit-text-stroke:0.6px #f5f5f5;">310 mV</div>
<div class="t" id="tg0" style="left:758.6px;top:354.87px;font-size:34px;line-height:44px;font-weight:700;color:#fff;letter-spacing:0.000px;transform:scaleX(1.0054);transform-origin:0 0;-webkit-text-stroke:1.1px #fff;">PSU</div>
<div class="t" id="tg1" style="left:901.3px;top:354.87px;font-size:34px;line-height:44px;font-weight:700;color:#fff;letter-spacing:0.000px;transform:scaleX(1.0846);transform-origin:0 0;-webkit-text-stroke:1.1px #fff;">Alk</div>
<div class="t" id="tg2" style="left:1051.6px;top:354.87px;font-size:34px;line-height:44px;font-weight:700;color:#fff;letter-spacing:0.000px;transform:scaleX(1.0513);transform-origin:0 0;-webkit-text-stroke:1.1px #fff;">Ca</div>
<div class="t" id="tg3" style="left:1211.5px;top:354.87px;font-size:34px;line-height:44px;font-weight:700;color:#fff;letter-spacing:0.000px;transform:scaleX(1.0673);transform-origin:0 0;-webkit-text-stroke:1.1px #fff;">Mg</div>
<div class="t" id="tg4" style="left:1365.3px;top:354.87px;font-size:34px;line-height:44px;font-weight:700;color:#fff;letter-spacing:0.000px;transform:scaleX(1.0392);transform-origin:0 0;-webkit-text-stroke:1.1px #fff;">NO<span class="sb">3</span></div>
<div class="t" id="tg5" style="left:1522.9px;top:354.87px;font-size:34px;line-height:44px;font-weight:700;color:#fff;letter-spacing:0.000px;transform:scaleX(1.0204);transform-origin:0 0;-webkit-text-stroke:1.1px #fff;">PO<span class="sb">4</span></div>
<div class="t" id="tg6" style="left:1690.1px;top:354.87px;font-size:34px;line-height:44px;font-weight:700;color:#fff;letter-spacing:0.000px;transform:scaleX(1.0923);transform-origin:0 0;-webkit-text-stroke:1.1px #fff;">T</div>
<div class="t" id="tg7" style="left:1815.9px;top:354.87px;font-size:34px;line-height:44px;font-weight:700;color:#fff;letter-spacing:0.000px;transform:scaleX(1.0639);transform-origin:0 0;-webkit-text-stroke:1.1px #fff;">ph</div>
<div class="t" id="tg8" style="left:1924.3px;top:354.87px;font-size:34px;line-height:44px;font-weight:700;color:#fff;letter-spacing:0.000px;transform:scaleX(1.0219);transform-origin:0 0;-webkit-text-stroke:1.1px #fff;">Redox</div>
<div class="t" id="tg_b" style="left:765.5px;top:1551.47px;font-size:34px;line-height:44px;font-weight:700;color:#fff;letter-spacing:0.000px;transform:scaleX(1.0846);transform-origin:0 0;-webkit-text-stroke:1.1px #fff;">Alk</div>
</body>
</html>
